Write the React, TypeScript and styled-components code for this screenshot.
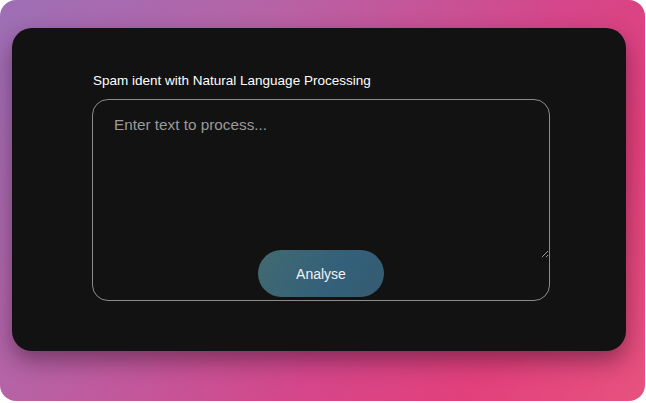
import React from 'react'
import styled, { createGlobalStyle } from 'styled-components'

const GlobalStyle = createGlobalStyle`
    html, body {
        margin: 0;
        padding: 0;
        background: #ffffff;
        font-family: "Liberation Sans", Arial, sans-serif;
    }
`

const Frame = styled.div`
    width: 645px;
    height: 401px;
    box-sizing: border-box;
    border-radius: 16px;
    padding: 28px 0 0 12px;
    background: linear-gradient(124deg, #9d6fb6 0%, #b663a6 30%, #d5468a 62%, #e2407b 80%, #e6527f 100%);
    overflow: hidden;
`

const Card = styled.div`
    width: 614px;
    height: 323px;
    box-sizing: border-box;
    border-radius: 20px;
    background: #121212;
    box-shadow: 0 10px 22px rgba(40, 10, 30, 0.45);
    padding: 45px 0 0 81px;
    display: flex;
    flex-direction: column;
`

const Label = styled.label`
    font-size: 13.5px;
    color: #ffffff;
    line-height: 16px;
    margin-bottom: 10px;
`

const Box = styled.div`
    width: 458px;
    height: 202px;
    margin-left: -1px;
    box-sizing: border-box;
    border: 1px solid #8c8c8c;
    border-radius: 16px;
    display: flex;
    flex-direction: column;
    align-items: center;
`

const TextArea = styled.textarea`
    width: 100%;
    height: 158px;
    box-sizing: border-box;
    padding: 16px 21px;
    background: transparent;
    border: none;
    border-radius: 16px 16px 0 0;
    outline: none;
    color: #dddddd;
    font-family: "Liberation Sans", Arial, sans-serif;
    font-size: 15.3px;
    &::placeholder {
        color: #9a9a9a;
    }
`

const Button = styled.button`
    width: 126px;
    height: 47px;
    margin-top: -8px;
    border: none;
    border-radius: 24px;
    background: linear-gradient(120deg, #426a71 0%, #33607a 60%, #355b70 100%);
    color: #f2f2f2;
    font-family: "Liberation Sans", Arial, sans-serif;
    font-size: 14px;
    cursor: pointer;
`

export default function App() {
    return (
        <>
            <GlobalStyle />
            <Frame>
                <Card>
                    <Label>Spam ident with Natural Language Processing</Label>
                    <Box>
                        <TextArea placeholder="Enter text to process..." />
                        <Button>Analyse</Button>
                    </Box>
                </Card>
            </Frame>
        </>
    )
}
